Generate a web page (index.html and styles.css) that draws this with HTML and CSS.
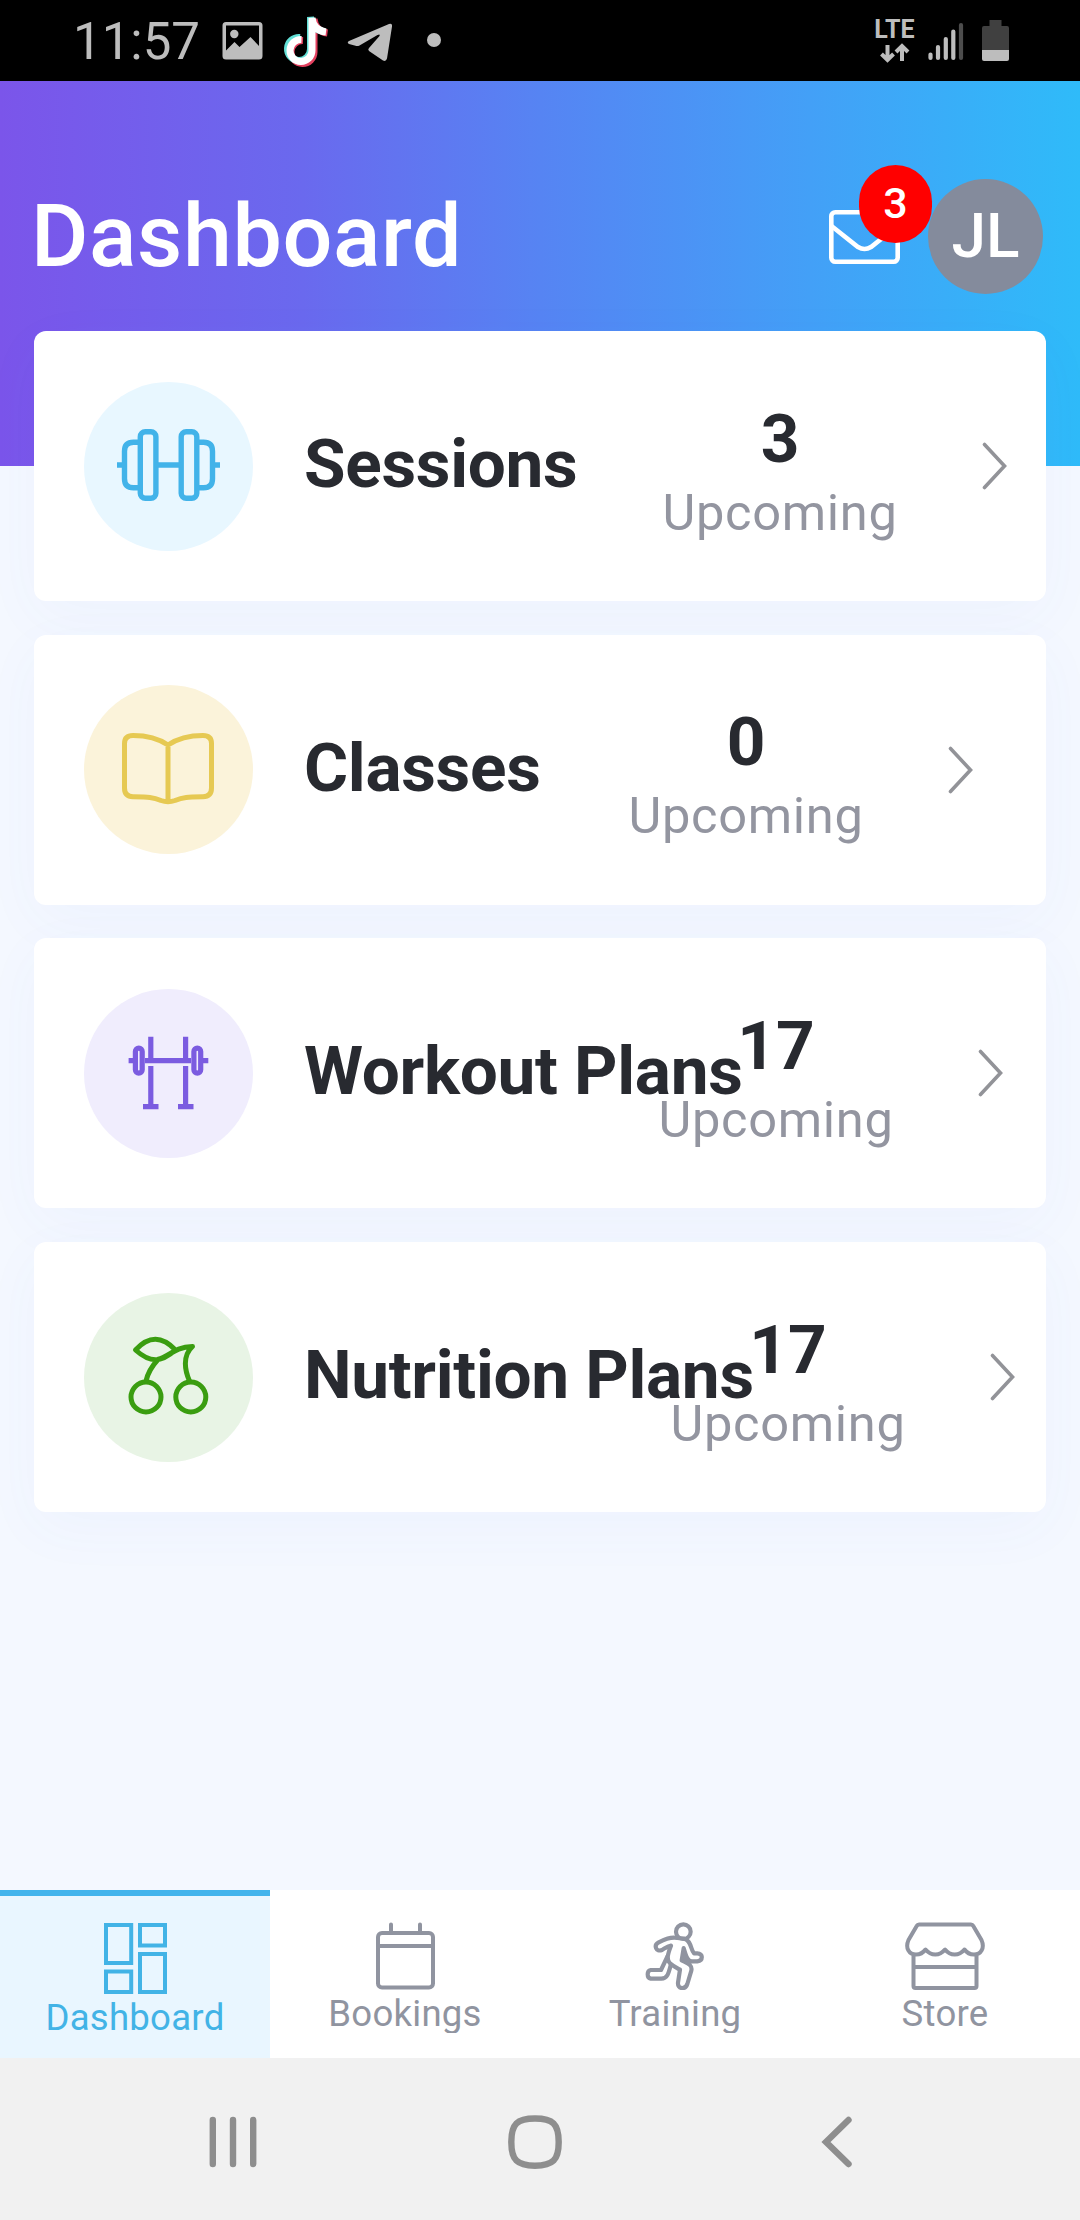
FILE: index.html
```html
<!DOCTYPE html>
<html lang="en">
<head>
  <meta charset="UTF-8">
  <meta name="viewport" content="width=device-width, initial-scale=1.0">
  <title>Dashboard</title>
  <link rel="stylesheet" href="styles.css">
</head>
<body>
<div class="status-bar">
  <span class="time">11:57</span>
  <svg class="status-left" width="230" height="81" viewBox="215 0 230 81">
    <!-- gallery -->
    <path fill="#bdbdbd" fill-rule="evenodd" d="M226 22h33a3.500 3.500 0 0 1 3.500 3.500v30.500a3.500 3.500 0 0 1-3.500 3.500h-33a3.500 3.500 0 0 1-3.500-3.500v-30.500a3.500 3.500 0 0 1 3.500-3.500zM226 25.500v25l8.500-8.500 5 5 11-10 8.500 9v-20.500z"/>
    <circle cx="234.300" cy="34" r="4.200" fill="#bdbdbd"/>
    <!-- tiktok -->
    <g fill="none" stroke-width="7">
      <path stroke="#e2405f" d="M303 40.500a11.500 11.500 0 1 0 11 11.500V19c1 9 6 13 13.500 14"/>
      <path stroke="#62dfd6" d="M300 37.500a11.500 11.500 0 1 0 10.500 11.500V17c1 9 6 13 12 14"/>
      <path stroke="#fff" d="M301.500 39.500a11 11 0 1 0 10.500 11V18c1 9 6 13 14 14"/>
    </g>
    <!-- telegram -->
    <path fill="#bdbdbd" d="M349 41 389 24q3.500-1 3 2.500L387 58.500q-1 3.500-4 2L369 51q-1.500-1.500 0-3l10.500-12q1-2.500-2-1L359.500 45.500q-2 1-4 .3L349 44q-2.500-1.500 0-3z"/>
    <circle cx="434" cy="40" r="7" fill="#bdbdbd"/>
  </svg>
  <div class="network">
    <span>LTE</span>
    <svg width="30" height="20" viewBox="0 0 30 20" fill="none" stroke="#bdbdbd" stroke-width="4">
      <path d="M7.500 2v14M1.500 11l6 6 6-6M22 18V4M16 9l6-6 6 6"/>
    </svg>
  </div>
  <svg class="signal" width="36" height="40" viewBox="0 0 36 40" stroke="#bdbdbd" stroke-width="4.200" stroke-linecap="round">
    <path d="M2.500 33.500V37M10 26v11M17.800 18v19M25.300 10.500V37"/>
    <path stroke="#4d4d4d" d="M33 4v33"/>
  </svg>
  <svg class="battery" width="27" height="41" viewBox="0 0 27 41">
    <path fill="#404040" d="M7.500 0h12v6H25a2 2 0 0 1 2 2v22H0V8a2 2 0 0 1 2-2h5.500z"/>
    <path fill="#bdbdbd" d="M0 30h27v9a2 2 0 0 1-2 2H2a2 2 0 0 1-2-2z"/>
  </svg>
</div>

<header class="header">
  <h1>Dashboard</h1>
  <div class="mail">
    <svg width="71" height="54" viewBox="0 0 71 54" fill="none" stroke="#fff" stroke-width="4.600">
      <rect x="2.300" y="2.300" width="66.400" height="49.400" rx="4"/>
      <path d="M2.500 16 29 37q6.500 4 13 0L68.500 16"/>
    </svg>
    <span class="badge">3</span>
  </div>
  <div class="avatar">JL</div>
</header>

<main class="cards">
  <a class="card">
    <span class="circle blue">
      <svg width="169" height="169" viewBox="0 0 169 169" fill="none" stroke="currentColor" stroke-width="5.400">
        <rect x="56.300" y="49.800" width="15.600" height="66.400" rx="5"/>
        <rect x="97.200" y="49.800" width="15.600" height="66.400" rx="5"/>
        <path d="M56 60.200h-6.500q-9 0-9 9v27.600q0 9 9 9H56M113 60.200h6.500q9 0 9 9v27.600q0 9-9 9H113M72 83h25M33 83h7M129 83h7"/>
      </svg>
    </span>
    <span class="name name-sessions">Sessions</span>
    <span class="stat"><b>3</b><span>Upcoming</span></span>
    <svg class="chevron" width="26" height="48" viewBox="0 0 26 48"><path d="M2.500 2.500 22.500 24 2.500 45.500"/></svg>
  </a>
  <a class="card">
    <span class="circle yellow">
      <svg width="169" height="169" viewBox="0 0 169 169" fill="none" stroke="currentColor" stroke-width="5">
        <path d="M84 60C73 52.500 62 50.500 49 50.500q-8.500 0-8.500 8V103q0 8.500 8.500 8.800C64 112 69 112 77 115.500q7 2.500 14 0C99 112 104 112 119 111.800q8.500-.3 8.500-8.800V58.500q0-8-8.500-8C106 50.500 95 52.500 84 60zV116"/>
      </svg>
    </span>
    <span class="name name-classes">Classes</span>
    <span class="stat"><b>0</b><span>Upcoming</span></span>
    <svg class="chevron" width="26" height="48" viewBox="0 0 26 48"><path d="M2.500 2.500 22.500 24 2.500 45.500"/></svg>
  </a>
  <a class="card">
    <span class="circle purple">
      <svg width="169" height="169" viewBox="0 0 169 169" fill="none" stroke="currentColor" stroke-width="5.200">
        <path d="M66.800 47.700V72M101.600 47.700V72M66.800 77v38M101.600 77v38M59 117.600h15.500M94 117.600h15.500M61 71.700h46M44.600 71.700h5M119 71.700h5.300"/>
        <rect x="51.400" y="59.200" width="6.800" height="25" rx="3.400"/>
        <rect x="109.900" y="59.200" width="6.800" height="25" rx="3.400"/>
      </svg>
    </span>
    <span class="name name-workout">Workout Plans</span>
    <span class="stat"><b>17</b><span>Upcoming</span></span>
    <svg class="chevron" width="26" height="48" viewBox="0 0 26 48"><path d="M2.500 2.500 22.500 24 2.500 45.500"/></svg>
  </a>
  <a class="card">
    <span class="circle green">
      <svg width="169" height="169" viewBox="0 0 169 169" fill="none" stroke="currentColor" stroke-width="5" stroke-linejoin="round" stroke-linecap="round">
        <circle cx="62" cy="104" r="15"/>
        <circle cx="106.800" cy="104" r="15"/>
        <path d="M62 88C64 79 68 73 74 66.500M51.500 57C65 42.500 78 43 91.500 57 77 70 66 70 51.500 57zM74 66.500C85 64 90 54 108.500 53.500 98 63 101 78 105.500 88"/>
      </svg>
    </span>
    <span class="name name-nutrition">Nutrition Plans</span>
    <span class="stat"><b>17</b><span>Upcoming</span></span>
    <svg class="chevron" width="26" height="48" viewBox="0 0 26 48"><path d="M2.500 2.500 22.500 24 2.500 45.500"/></svg>
  </a>
</main>

<nav class="tabs">
  <a class="tab active">
    <svg width="63" height="71" viewBox="0 0 63 71" fill="none" stroke="currentColor" stroke-width="4">
      <path d="M2 2h25.200v38H2zM36 2h25v20.500H36zM2 48.500h25.200V69H2zM36 31h25v38H36z"/>
    </svg>
    <span>Dashboard</span>
  </a>
  <a class="tab">
    <svg width="59" height="68" viewBox="0 0 59 68" fill="none" stroke="currentColor" stroke-width="4">
      <rect x="2" y="11" width="55" height="54.500" rx="4"/>
      <path d="M2 24h55"/>
      <path stroke-linecap="round" d="M15 2.500v8M44 2.500v8"/>
    </svg>
    <span>Bookings</span>
  </a>
  <a class="tab">
    <svg width="60" height="68" viewBox="29 36 180 204" fill="none" stroke="currentColor" stroke-width="12.500" stroke-linejoin="round">
      <circle cx="144" cy="65" r="22"/>
      <path d="M126 84C105 80 88 88 70 97 54 106 62 127 80 120 90 114 96 109 107 107 98 130 92 148 104 160 113 168 122 172 134 179L128 218C126 238 150 240 156 222L168 182C172 164 156 160 139 151L145 114C150 130 152 142 160 150Q164 154 170 154H186C204 152 204 130 186 130H176C166 120 168 90 146 86z"/>
      <path d="M97 138 77 180H46C34 182 34 204 46 206H78C96 206 100 190 106 166"/>
      <path fill="currentColor" stroke="none" d="M145 114 164 157 139 151z"/>
    </svg>
    <span>Training</span>
  </a>
  <a class="tab">
    <svg width="80" height="68" viewBox="0 0 80 68" fill="none" stroke="currentColor" stroke-width="4" stroke-linejoin="round">
      <path d="M14 2.500h52q1.500 0 2.300 1.500L76.500 18C80 26 76 32.500 69 32.500q-6 0-9.500-5-4 5-9.800 5t-9.700-5q-4 5-9.700 5t-9.800-5q-3.500 5-9.500 5C4 32.500 0 26 3.500 18L11.700 4q.8-1.500 2.300-1.500zM8.500 32v32q0 2 2 2h59q2 0 2-2V32M8.500 45h63"/>
    </svg>
    <span>Store</span>
  </a>
</nav>

<div class="nav-bar">
  <svg width="1080" height="162" viewBox="0 0 1080 162" fill="none" stroke="#8e8e8e" stroke-width="6.400" stroke-linecap="round">
    <path d="M212.800 62v44M233 62v44M253.200 62v44"/>
    <path d="M535 60.500c18 0 23.700 5.500 23.700 23.500s-5.700 23.700-23.700 23.700-23.700-5.700-23.700-23.700 5.700-23.500 23.700-23.500z"/>
    <path d="M848.500 62 826 84l22.500 22"/>
  </svg>
</div>
</body>
</html>
```
FILE: styles.css
```css
* {
  box-sizing: border-box;
}

body {
  display: flex;
  flex-direction: column;
  width: 1080px;
  height: 2220px;
  margin: 0;
  font-family: Roboto, sans-serif;
  background-color: #f4f8ff;
  overflow: hidden;
}

svg {
  display: block;
}

.status-bar {
  display: flex;
  height: 81px;
  padding-left: 73px;
  background-color: #000;
  color: #bdbdbd;
}

.time {
  width: 142px;
  font-size: 51px;
  line-height: 84px;
}

.network {
  display: flex;
  flex-direction: column;
  align-items: center;
  width: 41px;
  margin-left: 429px;
  padding-top: 17px;
  font-size: 25px;
  font-weight: 700;
  line-height: 26px;
}

.signal {
  margin: 21px 17px 0 13px;
}

.battery {
  margin-top: 20px;
  margin-left: 1px;
}

.header {
  display: flex;
  align-items: center;
  height: 385px;
  padding: 0 37px 74px 31px;
  background: linear-gradient(to right, #7b55ea 0%, #6a69ee 28%, #5684f3 50%, #43a0f7 75%, #2fbbf9 100%);
  color: #fff;
}

h1 {
  flex: 1;
  margin: 0;
  padding-bottom: 2px;
  font-size: 88px;
  font-weight: 500;
  letter-spacing: 0.600px;
  line-height: 100px;
}

.mail {
  position: relative;
  margin-right: 28px;
}

.badge {
  position: absolute;
  left: 30px;
  top: -45px;
  width: 73px;
  height: 78px;
  border-radius: 37px;
  background-color: #f00;
  font-size: 43px;
  font-weight: 500;
  line-height: 76px;
  text-align: center;
}

.avatar {
  width: 115px;
  height: 115px;
  border-radius: 50%;
  background-color: #848b9c;
  font-size: 62px;
  font-weight: 500;
  line-height: 113px;
  text-align: center;
}

.cards {
  display: flex;
  flex-direction: column;
  flex: 1;
  gap: 33.700px;
  margin-top: -135px;
  padding: 0 34px;
}

.card {
  display: flex;
  align-items: center;
  height: 270px;
  padding-left: 50px;
  border-radius: 12px;
  background-color: #fff;
  box-shadow: 0 16px 60px rgba(80, 110, 220, 0.04);
}

.circle {
  flex: none;
  width: 169px;
  height: 169px;
  margin-right: 51px;
  border-radius: 50%;
}

.blue {
  background-color: #e8f7ff;
  color: #42b3e9;
}

.yellow {
  background-color: #fbf3da;
  color: #e6c953;
}

.purple {
  background-color: #f0edfd;
  color: #7b5ce0;
}

.green {
  background-color: #e8f4e5;
  color: #3a9d10;
}

/* long names run over into the counter column */
.name {
  flex: none;
  padding-bottom: 4px;
  color: #282a30;
  font-size: 67.500px;
  font-weight: 700;
  letter-spacing: -0.300px;
  line-height: 80px;
  white-space: nowrap;
}

.name-sessions {
  width: 356px;
}

.name-classes {
  width: 322px;
}

.name-workout {
  width: 352px;
}

.name-nutrition {
  width: 364px;
}

.stat {
  display: flex;
  flex: none;
  flex-direction: column;
  align-items: center;
  width: 240px;
  padding-top: 10px;
  color: #9395a0;
  font-size: 50.600px;
  letter-spacing: 0.700px;
  line-height: 65px;
}

.stat b {
  color: #282a30;
  font-size: 67.500px;
  letter-spacing: 0;
  line-height: 82px;
}

.chevron {
  flex: none;
  margin-left: 82px;
  fill: none;
  stroke: #929398;
  stroke-width: 3.600;
  stroke-linecap: round;
}

.tabs {
  display: flex;
  height: 168px;
  background-color: #fff;
}

.tab {
  display: flex;
  flex: 1;
  flex-direction: column;
  align-items: center;
  padding-top: 32px;
  color: #9094a0;
  font-size: 36.560px;
  letter-spacing: 0.250px;
}

.tab span {
  height: 43px;
  line-height: 47px;
  overflow: hidden;
}

.active {
  padding-top: 27px;
  border-top: 6px solid #42b4ec;
  background-color: #e9f6ff;
  color: #42b3e6;
}

.nav-bar {
  height: 162px;
  background-color: #f1f1f1;
}
```
